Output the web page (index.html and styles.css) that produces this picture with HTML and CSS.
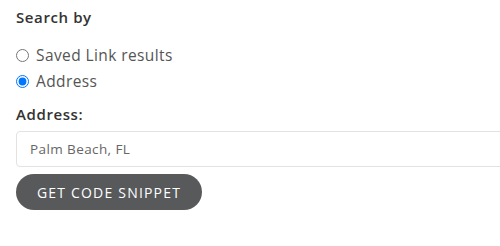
FILE: index.html
```html
<!DOCTYPE html>
<html>
<head>
<meta charset="utf-8">
<link rel="stylesheet" href="styles.css">
</head>
<body>
<form class="panel">
  <div class="heading">Search by</div>
  <div class="options">
    <label class="option"><input type="radio" name="by" class="radio"><span>Saved Link results</span></label>
    <label class="option"><input type="radio" name="by" class="radio" checked><span>Address</span></label>
  </div>
  <label class="field-label" for="addr">Address:</label>
  <div class="input-wrap">
    <input id="addr" class="text-input" type="text" value="Palm Beach, FL">
  </div>
  <button type="button" class="btn">Get code snippet</button>
</form>
</body>
</html>
```
FILE: styles.css
```css
html, body {
  margin: 0;
  padding: 0;
  background: #fff;
  overflow: hidden;
}
.panel {
  display: flex;
  flex-direction: column;
  align-items: flex-start;
  padding: 7px 0 0 16px;
  font-family: "Open Sans", "Noto Sans", sans-serif;
  color: #333;
  overflow: hidden;
}
.heading {
  font-size: 15px;
  font-weight: 600;
  line-height: 20px;
  letter-spacing: 0.6px;
  color: #333;
}
.options {
  display: flex;
  flex-direction: column;
  gap: 6px;
  margin-top: 18px;
}
.option {
  display: flex;
  align-items: center;
  gap: 7px;
  font-size: 15.5px;
  line-height: 20px;
  letter-spacing: 0.4px;
  color: #555;
}
.radio {
  margin: 0;
  width: 13px;
  height: 13px;
}
.field-label {
  margin-top: 13px;
  font-size: 15px;
  font-weight: 600;
  line-height: 20px;
  letter-spacing: 0.6px;
  color: #333;
}
.input-wrap {
  align-self: stretch;
  margin-top: 7px;
  margin-right: -20px;
}
.text-input {
  display: block;
  box-sizing: border-box;
  width: 100%;
  height: 36px;
  border: 1px solid #e2e2e2;
  border-radius: 4px;
  padding: 0 13px;
  font-family: inherit;
  font-size: 13.5px;
  letter-spacing: 0.4px;
  color: #666;
  outline: none;
}
.btn {
  margin-top: 7px;
  height: 36px;
  width: 186px;
  border: none;
  border-radius: 18px;
  background: #58595b;
  color: #fff;
  font-family: inherit;
  font-size: 14px;
  letter-spacing: 1.2px;
  text-transform: uppercase;
  padding: 0;
}
```
